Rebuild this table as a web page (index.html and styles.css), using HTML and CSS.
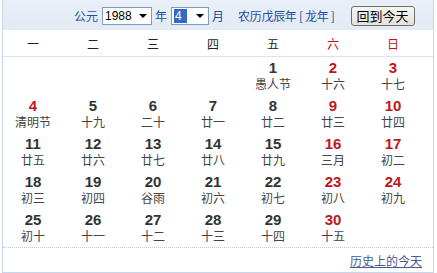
FILE: index.html
```html
<!DOCTYPE html>
<html lang="zh">
<head>
<meta charset="utf-8">
<link rel="stylesheet" href="styles.css">
</head>
<body>
<div class="cal">
  <div class="head">
    <span class="lbl">公元</span>
    <div class="sel sel-year"><span class="val">1988</span><span class="arrow"></span></div>
    <span class="lbl">年</span>
    <div class="sel sel-month"><span class="val hl">4</span><span class="arrow"></span></div>
    <span class="lbl">月</span>
    <span class="lunar">农历戊辰年 [ 龙年 ]</span>
    <button class="today">回到今天</button>
  </div>
  <div class="week">
    <span>一</span><span>二</span><span>三</span><span>四</span><span>五</span><span class="we">六</span><span class="we">日</span>
  </div>
  <div class="grid">
    <div class="c"></div><div class="c"></div><div class="c"></div><div class="c"></div>
    <div class="c"><b>1</b><i>愚人节</i></div>
    <div class="c r"><b>2</b><i>十六</i></div>
    <div class="c r"><b>3</b><i>十七</i></div>
    <div class="c r"><b>4</b><i>清明节</i></div>
    <div class="c"><b>5</b><i>十九</i></div>
    <div class="c"><b>6</b><i>二十</i></div>
    <div class="c"><b>7</b><i>廿一</i></div>
    <div class="c"><b>8</b><i>廿二</i></div>
    <div class="c r"><b>9</b><i>廿三</i></div>
    <div class="c r"><b>10</b><i>廿四</i></div>
    <div class="c"><b>11</b><i>廿五</i></div>
    <div class="c"><b>12</b><i>廿六</i></div>
    <div class="c"><b>13</b><i>廿七</i></div>
    <div class="c"><b>14</b><i>廿八</i></div>
    <div class="c"><b>15</b><i>廿九</i></div>
    <div class="c r"><b>16</b><i>三月</i></div>
    <div class="c r"><b>17</b><i>初二</i></div>
    <div class="c"><b>18</b><i>初三</i></div>
    <div class="c"><b>19</b><i>初四</i></div>
    <div class="c"><b>20</b><i>谷雨</i></div>
    <div class="c"><b>21</b><i>初六</i></div>
    <div class="c"><b>22</b><i>初七</i></div>
    <div class="c r"><b>23</b><i>初八</i></div>
    <div class="c r"><b>24</b><i>初九</i></div>
    <div class="c"><b>25</b><i>初十</i></div>
    <div class="c"><b>26</b><i>十一</i></div>
    <div class="c"><b>27</b><i>十二</i></div>
    <div class="c"><b>28</b><i>十三</i></div>
    <div class="c"><b>29</b><i>十四</i></div>
    <div class="c r"><b>30</b><i>十五</i></div>
    <div class="c"></div>
  </div>
  <div class="foot"><a href="#">历史上的今天</a></div>
</div>
</body>
</html>
```
FILE: styles.css
```css
html, body { margin: 0; padding: 0; background: #fff; }
body { font-family: "Liberation Sans", Arial, "Noto Sans CJK SC", sans-serif; font-size: 12px; color: #333; }
.cal {
  box-sizing: border-box;
  width: 432px;
  height: 273px;
  margin-left: 2px;
  border: 1px solid #c6d6ec;
  border-top: none;
  display: flex;
  flex-direction: column;
}
.head {
  height: 30px;
  box-sizing: border-box;
  background: linear-gradient(#eaf0f8, #e2eaf5);
  display: flex;
  align-items: center;
  padding-left: 68px;
  font-family: "Noto Sans CJK SC", sans-serif;
}
.lbl { color: #1f4f9e; font-size: 12px; margin: 0 4px 0 3px; }
.lunar { color: #1f4f9e; font-size: 12px; margin-left: 10px; letter-spacing: -0.3px; }
.sel {
  box-sizing: border-box;
  height: 18px;
  border: 1px solid #7f9db9;
  background: #fff;
  display: flex;
  align-items: center;
  padding-left: 2px;
  font-family: "Liberation Sans", Arial, sans-serif;
  font-size: 12px;
  color: #000;
  margin-top: 2px;
}
.sel-year { width: 50px; }
.sel-month { width: 38px; }
.val { flex: 1; line-height: 14px; }
.val.hl { flex: 0 0 auto; background: #316ac5; color: #fff; padding: 0 5px 0 1px; margin-right: auto; }
.arrow {
  width: 0; height: 0;
  border-left: 4px solid transparent;
  border-right: 4px solid transparent;
  border-top: 4px solid #000;
  margin: 0 4px 0 5px;
}
.today {
  margin-left: 16px;
  margin-top: 2px;
  height: 20px;
  width: 64px;
  padding: 0;
  border: 1px solid #707070;
  border-radius: 3px;
  background: linear-gradient(#f6f6f3, #e3e2da);
  font-family: "Noto Sans CJK SC", sans-serif;
  font-size: 13px;
  line-height: 18px;
  color: #000;
}
.week {
  height: 26px;
  display: grid;
  grid-template-columns: repeat(7, 60px);
  align-items: center;
  border-bottom: 1px solid #dde3ea;
  font-family: "Noto Sans CJK SC", sans-serif;
  font-size: 12px;
  color: #222;
}
.week span { text-align: center; }
.week .we { color: #c01515; }
.grid {
  height: 190px;
  display: grid;
  grid-template-columns: repeat(7, 60px);
  grid-auto-rows: 38px;
}
.c {
  display: flex;
  flex-direction: column;
  align-items: center;
  padding-top: 3px;
}
.c b {
  font-family: "Liberation Sans", Arial, sans-serif;
  font-weight: bold;
  font-size: 15px;
  line-height: 16px;
  color: #333;
}
.c i {
  font-style: normal;
  font-family: "Noto Sans CJK SC", sans-serif;
  font-size: 12px;
  line-height: 16px;
  color: #444;
}
.c.r b { color: #c1161c; }
.foot {
  flex: 1;
  border-top: 1px dotted #c8c8c8;
  display: flex;
  justify-content: flex-end;
  align-items: center;
  padding-right: 11px;
  padding-top: 1px;
}
.foot a {
  font-family: "Noto Sans CJK SC", sans-serif;
  font-size: 12px;
  color: #4a5a94;
  text-decoration: underline;
}
```
